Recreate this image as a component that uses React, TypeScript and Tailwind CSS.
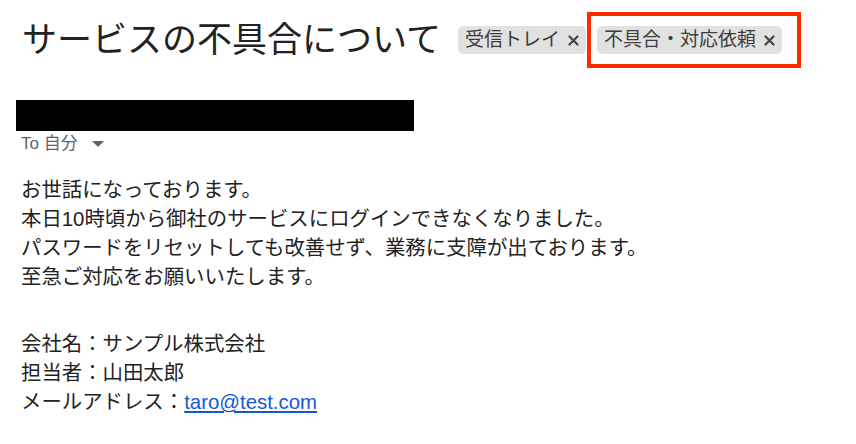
const FONT = "font-['Liberation_Sans','Noto_Sans_CJK_JP',sans-serif]";

function Label({ text }: { text: string }) {
  return (
    <span className="flex h-[28px] items-center gap-[8px] rounded-[5px] bg-[#e1e2e0] pl-[7px] pr-[7px] text-[19px] text-[#3c3c3c]">
      {text}
      <svg width="11" height="11" viewBox="0 0 11 11">
        <path d="M1.5 1.5 L9.5 9.5 M9.5 1.5 L1.5 9.5" stroke="#444" strokeWidth="2.2" strokeLinecap="round" />
      </svg>
    </span>
  );
}

export default function App() {
  return (
    <div className={`${FONT} h-[444px] w-[856px] overflow-hidden bg-white text-[#222]`}>
      {/* Header */}
      <div className="flex items-center pl-[22px] pt-[12px]">
        <h1 className="mr-[17px] text-[35px] font-normal leading-[56px] text-[#222]">サービスの不具合について</h1>
        <Label text="受信トレイ" />
        <div className="ml-px border-4 border-[#ff2a00] pb-[10px] pl-[6px] pr-[15px] pt-[10px]">
          <Label text="不具合・対応依頼" />
        </div>
      </div>

      {/* Sender */}
      <div className="ml-[16px] mt-[32px] h-[31px] w-[398px] bg-black" />
      <div className="ml-[21px] mt-[2px] flex items-center gap-[12px] text-[17px] leading-[22px] text-[#5f6368]">
        To 自分
        <svg width="12" height="8" viewBox="0 0 12 8" className="ml-[2px]">
          <path d="M0 1 L12 1 L6 7 Z" fill="#5f6368" />
        </svg>
      </div>

      {/* Body */}
      <div className="ml-[21px] mt-[21px] text-[20.4px] leading-[29px] text-[#222]">
        <p>お世話になっております。</p>
        <p>本日10時頃から御社のサービスにログインできなくなりました。</p>
        <p>パスワードをリセットしても改善せず、業務に支障が出ております。</p>
        <p>至急ご対応をお願いいたします。</p>
        <p className="h-[38px]" />
        <p>会社名：サンプル株式会社</p>
        <p>担当者：山田太郎</p>
        <p>
          メールアドレス：
          <a href="#" className="text-[#1558d6] underline">taro@test.com</a>
        </p>
      </div>
    </div>
  );
}
